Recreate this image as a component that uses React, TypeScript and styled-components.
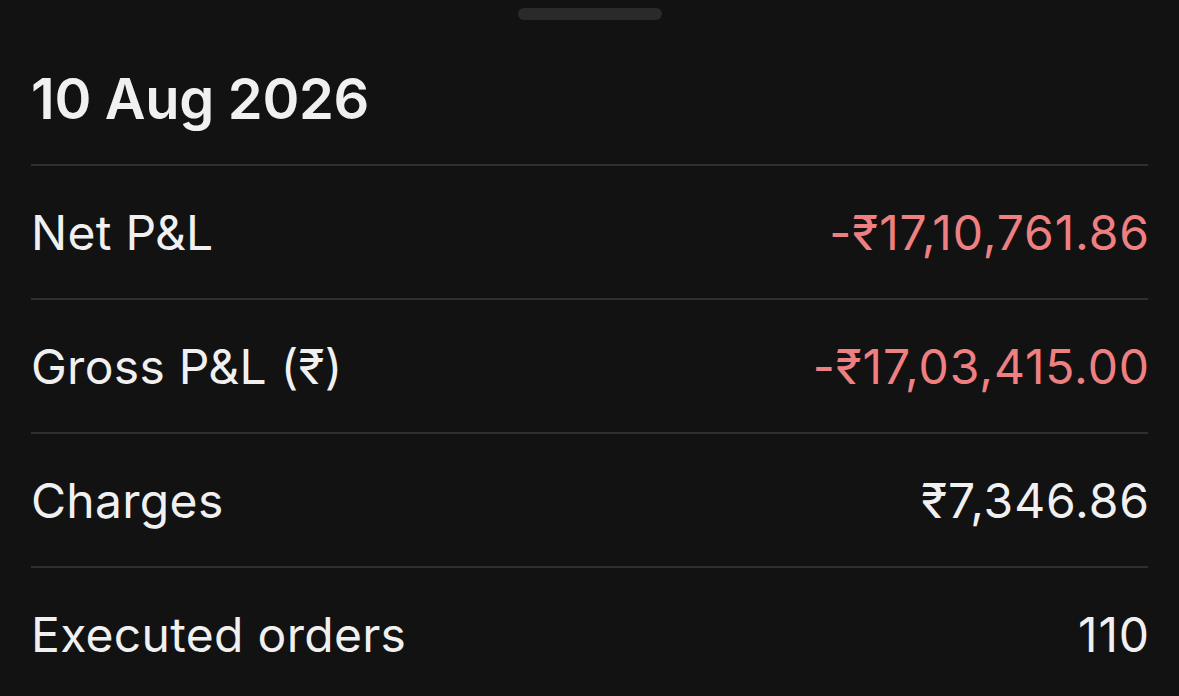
import React from 'react';
import styled, { createGlobalStyle } from 'styled-components';

const GlobalStyle = createGlobalStyle`
    html, body {
        margin: 0;
        padding: 0;
        background: #121212;
    }
    body {
        font-family: Inter, "Noto Sans", "DejaVu Sans", sans-serif;
        color: #f0f0f0;
        overflow: hidden;
    }
`;

const Sheet = styled.div`
    width: 1179px;
    height: 696px;
    background: #121212;
    display: flex;
    flex-direction: column;
    padding: 0 31px;
    box-sizing: border-box;
    overflow: hidden;
`;

const Handle = styled.div`
    width: 144px;
    height: 12px;
    border-radius: 6px;
    background: #2a2a2a;
    margin: 8px auto 0;
    flex-shrink: 0;
`;

const Title = styled.h1`
    margin: 0;
    padding: 51px 0 37px;
    font-size: 56px;
    line-height: 56px;
    font-weight: 600;
    color: #f0f0f0;
    letter-spacing: -0.3px;
`;

const Row = styled.div`
    display: flex;
    align-items: center;
    justify-content: space-between;
    height: 134px;
    flex-shrink: 0;
    border-top: 2px solid #2f2f2f;
    box-sizing: border-box;
    font-size: 48px;
`;

const Label = styled.span`
    color: #f0f0f0;
    letter-spacing: 0.3px;
`;

const Value = styled.span<{ $negative?: boolean }>`
    color: ${props => props.$negative ? '#ee8082' : '#f0f0f0'};
    letter-spacing: 0.9px;
    margin-right: -2px;
`;

type Stat = { label: string; value: string; negative?: boolean };

const stats: Stat[] = [
    { label: 'Net P&L', value: '-₹17,10,761.86', negative: true },
    { label: 'Gross P&L (₹)', value: '-₹17,03,415.00', negative: true },
    { label: 'Charges', value: '₹7,346.86' },
    { label: 'Executed orders', value: '110' },
];

export default function App() {
    return (
        <>
            <GlobalStyle />
            <Sheet>
                <Handle />
                <Title>10 Aug 2026</Title>
                {stats.map(s => (
                    <Row key={s.label}>
                        <Label>{s.label}</Label>
                        <Value $negative={s.negative}>{s.value}</Value>
                    </Row>
                ))}
            </Sheet>
        </>
    );
}
